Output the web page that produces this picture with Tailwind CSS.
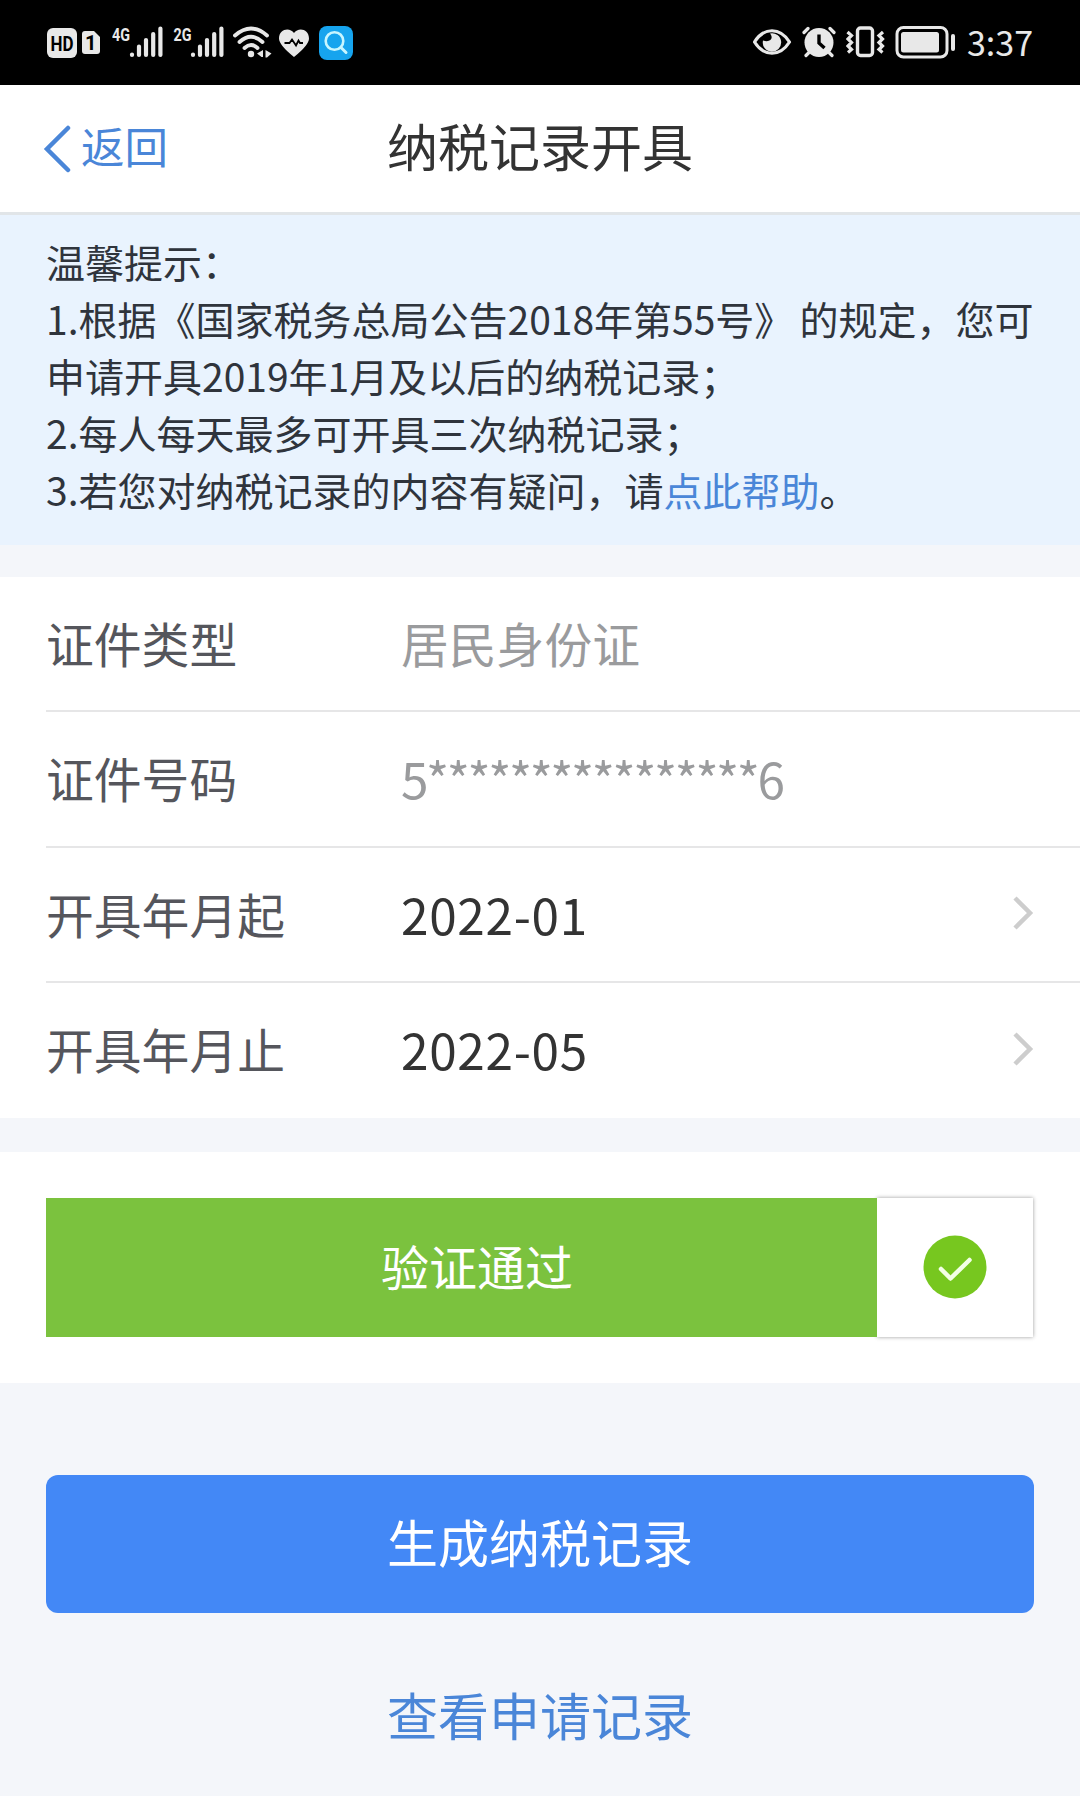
<!DOCTYPE html>
<html lang="zh-CN">
<head>
  <meta charset="UTF-8" />
  <meta name="viewport" content="width=device-width, initial-scale=1.0" />
  <title>纳税记录开具</title>
  <script src="https://cdn.jsdelivr.net/npm/@tailwindcss/browser@4"></script>
</head>
<body class="bg-[#f4f6fa] font-['Noto_Sans_CJK_SC',sans-serif] text-[#333]">
  <div class="w-[1080px] h-[1796px] overflow-hidden">

    <!-- status bar -->
    <div class="h-[85px] bg-black flex items-start justify-between pt-[23px] pl-[47px] pr-[47px]">
      <div class="flex">
        <svg class="w-[30px] h-10" viewBox="47 23 30 40">
          <rect x="47" y="28" width="30" height="30" rx="6" fill="#e8e8e8" />
          <text x="50.5" y="50.5" font-family="Roboto" font-weight="700" font-size="20" textLength="23" lengthAdjust="spacingAndGlyphs" fill="#000">HD</text>
        </svg>
        <svg class="w-[18px] h-10 ml-[5px]" viewBox="82 23 18 40">
          <path d="M85 31h9l6 6v14q0 3-3 3H85q-3 0-3-3V34q0-3 3-3z" fill="#e8e8e8" />
          <text x="85" y="50" font-family="Roboto" font-weight="700" font-size="20" fill="#000">1</text>
        </svg>
        <svg class="w-[52px] h-10 ml-3" viewBox="112 23 52 40">
          <text x="112" y="40.5" font-family="Roboto" font-weight="700" font-size="19" textLength="18" lengthAdjust="spacingAndGlyphs" fill="#e8e8e8">4G</text>
          <path d="M132 54.5v.5M139 46.5v8.500M146 40v15M153.200 34v21M160.400 28.500v26.500" stroke="#e8e8e8" stroke-width="4.2" stroke-linecap="round" />
        </svg>
        <svg class="w-[52px] h-10 ml-[9px]" viewBox="173 23 52 40">
          <text x="173.500" y="40.5" font-family="Roboto" font-weight="700" font-size="19" textLength="18" lengthAdjust="spacingAndGlyphs" fill="#e8e8e8">2G</text>
          <path d="M193 54.5v.5M200 46.5v8.500M207 40v15M214.200 34v21M221.400 28.500v26.500" stroke="#e8e8e8" stroke-width="4.2" stroke-linecap="round" />
        </svg>
        <svg class="w-[39px] h-10 ml-2" viewBox="233 23 39 40">
          <g fill="none" stroke="#e8e8e8" stroke-width="3.8" stroke-linecap="round">
            <path d="M235 35.500Q251 21.500 267 35.500" />
            <path d="M239.500 42Q251 31.500 262.500 42" />
            <path d="M244.500 48Q251 42 257.500 48" />
          </g>
          <circle cx="251" cy="54" r="3.2" fill="#e8e8e8" />
          <path d="M263 50v7h-1.500l-4.500-3.500zM265.500 50l6 3.500-4.500 4h-1.500z" fill="#e8e8e8" />
        </svg>
        <svg class="w-[31px] h-10 ml-[6px]" viewBox="278 23 31 40">
          <path d="M294 57Q279 45 279 38.500C279 28.500 290 27 294 33C298 27 309 28.500 309 38.500Q309 45 294 57z" fill="#e8e8e8" />
          <path d="M284.500 43h5l2.500-3.500 4 6 2.500-5 1.500 2.500h3" fill="none" stroke="#000" stroke-width="1.8" />
        </svg>
        <svg class="w-[35px] h-10 ml-[10px]" viewBox="319 23 35 40">
          <rect x="319" y="26" width="34" height="34" rx="8" fill="#16a4ee" />
          <circle cx="334.500" cy="41" r="8.8" fill="none" stroke="#c8f6ff" stroke-width="2.6" />
          <path d="M341 47.500l5 5" stroke="#c8f6ff" stroke-width="3" stroke-linecap="round" />
        </svg>
      </div>
      <div class="flex">
        <svg class="w-[39px] h-10" viewBox="753 23 39 40">
          <path d="M754.500 42C764 27 780 27 789.500 42C780 57 764 57 754.500 42z" fill="none" stroke="#e8e8e8" stroke-width="3.2" stroke-linejoin="round" />
          <path d="M770 33.500C774 38 770.500 43 763 40.500A9.200 9.200 0 1 0 770 33.500z" fill="#e8e8e8" />
        </svg>
        <svg class="w-[35px] h-10 ml-[10px]" viewBox="802 23 35 40">
          <circle cx="819" cy="42.500" r="14.5" fill="#e8e8e8" />
          <path d="M804 32.500l4-4M830 28.500l4 4M808.500 53l-2.500 2.500M829.500 53l2.500 2.500" stroke="#e8e8e8" stroke-width="3.2" stroke-linecap="round" />
          <path d="M819 34.500v8.500l5.500 5" fill="none" stroke="#000" stroke-width="3.4" />
        </svg>
        <svg class="w-[39px] h-10 ml-[9px]" viewBox="846 23 39 40">
          <rect x="857.500" y="28" width="15" height="27.5" rx="3" fill="none" stroke="#e8e8e8" stroke-width="3.4" />
          <path d="M847.500 32l4 3.500-3.500 3.500 3.500 3.500-3.500 3.500 3.500 3.500-3.500 3M883 32l-4 3.500 3.500 3.500-3.500 3.500 3.500 3.500-3.500 3.500 3.500 3" fill="none" stroke="#e8e8e8" stroke-width="3.2" />
        </svg>
        <svg class="w-[61px] h-10 ml-[10px]" viewBox="895 23 61 40">
          <rect x="897" y="27.500" width="50" height="29.5" rx="6.5" fill="none" stroke="#e8e8e8" stroke-width="3" />
          <rect x="901" y="32" width="38" height="20.5" rx="2.5" fill="#e8e8e8" />
          <path d="M953 36v13" stroke="#e8e8e8" stroke-width="4" stroke-linecap="round" />
        </svg>
        <span class="ml-[11px] h-10 leading-[38px] text-[34px] text-[#e8e8e8]">3:37</span>
      </div>
    </div>

    <!-- header -->
    <header class="h-[130px] bg-white border-b-3 border-[#e1e5e8] grid grid-cols-3 items-center px-[43px]">
      <a class="flex items-center text-[43.5px] text-[#4a86d8]">
        <svg class="w-7 h-12 mr-[10px]" viewBox="0 0 28 48">
          <path d="M25 3L4 24l21 21" fill="none" stroke="#4a86d8" stroke-width="4.5" stroke-linecap="round" />
        </svg>
        <span class="leading-[60px] pb-[6px]">返回</span>
      </a>
      <h1 class="text-center text-[51px] leading-[72px] whitespace-nowrap pb-2">纳税记录开具</h1>
    </header>

    <!-- tips -->
    <section class="h-[330px] bg-[#e9f3fe] pt-[18px] pl-[46px] text-[39px] leading-[57px] text-[#2f343c] whitespace-nowrap">
      <p>温馨提示：</p>
      <p>1.根据《国家税务总局公告2018年第55号<span class="mr-[6px]">》</span>的规定，您可</p>
      <p>申请开具2019年1月及以后的纳税记录；</p>
      <p>2.每人每天最多可开具三次纳税记录；</p>
      <p>3.若您对纳税记录的内容有疑问，请<a class="text-[#4a86d8]">点此帮助</a>。</p>
    </section>

    <!-- form -->
    <section class="mt-8 h-[541px] bg-white pl-[46px] text-[47.8px] leading-[70px]">
      <div class="h-[135px] flex items-center border-b-2 border-[#e6e6e7]">
        <span class="w-[355px] pb-[2px] text-[#55565c]">证件类型</span>
        <span class="pb-[2px] text-[#9a9b9d]">居民身份证</span>
      </div>
      <div class="h-[136px] flex items-center border-b-2 border-[#e6e6e7]">
        <span class="w-[355px] pb-[2px] text-[#55565c]">证件号码</span>
        <span class="pb-[2px] text-[49.5px] text-[#9a9b9d] tracking-[-2.4px]">5****************6</span>
      </div>
      <div class="h-[135px] flex items-center border-b-2 border-[#e6e6e7]">
        <span class="w-[355px] pb-[2px] text-[#55565c]">开具年月起</span>
        <span class="flex-1 pb-[2px] text-[49.5px] tracking-[0.7px]">2022-01</span>
        <svg class="w-6 h-9 mr-[46px] mb-[3px]" viewBox="0 0 24 36">
          <path d="M5 3l15 15L5 33" fill="none" stroke="#cdcdcd" stroke-width="4.5" />
        </svg>
      </div>
      <div class="h-[135px] flex items-center">
        <span class="w-[355px] pb-[4px] text-[#55565c]">开具年月止</span>
        <span class="flex-1 pb-[4px] text-[49.5px] tracking-[0.7px]">2022-05</span>
        <svg class="w-6 h-9 mr-[46px] mb-[4px]" viewBox="0 0 24 36">
          <path d="M5 3l15 15L5 33" fill="none" stroke="#cdcdcd" stroke-width="4.5" />
        </svg>
      </div>
    </section>

    <!-- slider check -->
    <section class="mt-[34px] h-[231px] bg-white px-[46px] pt-[46px]">
      <div class="flex h-[139px]">
        <div class="z-10 w-[831px] pl-[31px] bg-[#7bc23e] text-white text-[48px] leading-[134px] text-center">验证通过</div>
        <div class="w-[156px] pb-[2px] bg-white flex items-center justify-center shadow-[0_0_4px_rgba(0,0,0,0.4)]">
          <svg class="w-16 h-16" viewBox="0 0 64 64">
            <circle cx="32" cy="32" r="31.5" fill="#77c71f" />
            <path d="M18 34l9.500 9.500L46.500 25" fill="none" stroke="#f3ffe6" stroke-width="4.5" stroke-linecap="round" stroke-linejoin="round" />
          </svg>
        </div>
      </div>
    </section>

    <!-- actions -->
    <div class="px-[46px] pt-[92px]">
      <button class="block w-full h-[138px] rounded-xl bg-[#4388f6] text-white text-[51px] leading-[72px] pb-[7px]">生成纳税记录</button>
      <a class="block mt-[65px] text-center text-[51px] leading-[72px] text-[#4a86d8]">查看申请记录</a>
    </div>
  </div>
</body>
</html>
